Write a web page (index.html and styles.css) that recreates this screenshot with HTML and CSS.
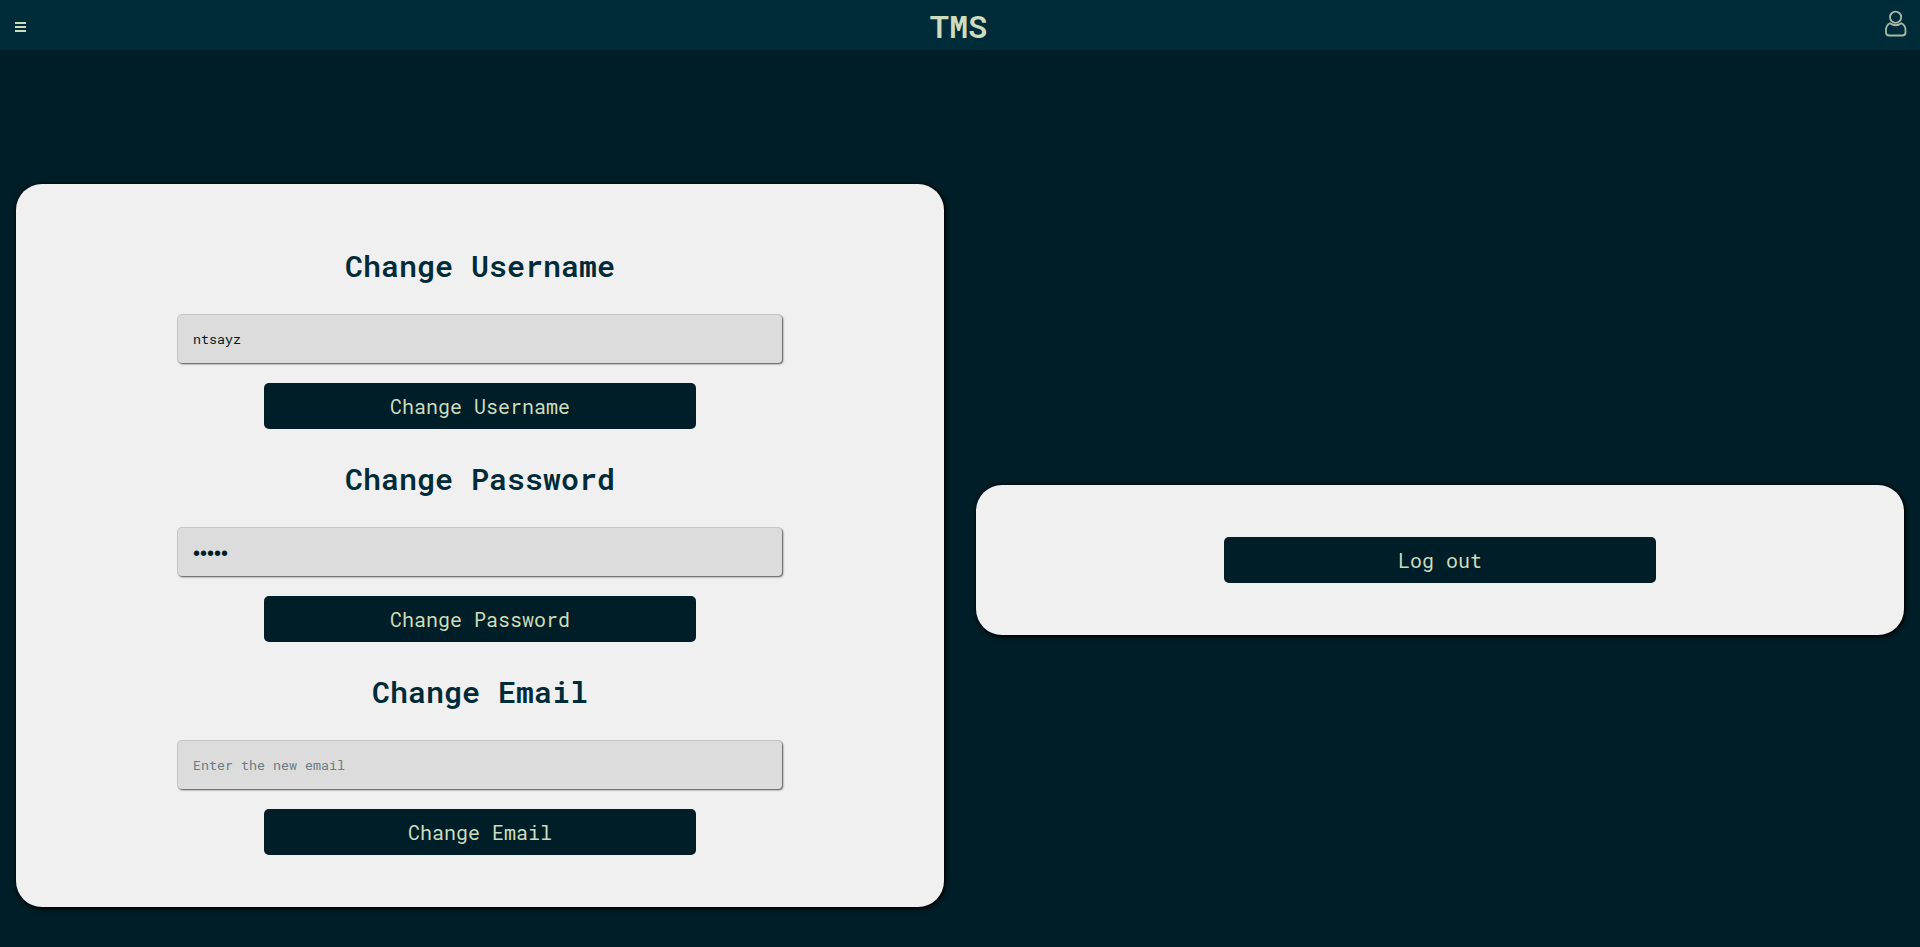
FILE: index.html
```
<!DOCTYPE html>
<html lang="en">
<head>
<meta charset="utf-8">
<title>TMS</title>
<link rel="stylesheet" href="styles.css">
</head>
<body>
<header class="topbar">
  <button class="menu" type="button" aria-label="Menu">
    <svg width="11" height="10" viewBox="0 0 11 10" fill="currentColor"><path d="M0 0h11v2H0zM0 4h11v2H0zM0 8h11v2H0z"/></svg>
  </button>
  <h1 class="brand">TMS</h1>
  <a class="profile" href="#" aria-label="Profile">
    <svg width="22" height="27" viewBox="0 0 22 27" fill="none" stroke="currentColor" stroke-width="1.8"><circle cx="10.6" cy="7.200" r="5.600"/><path d="M5 13.200C2.300 14.500 1 17 1 20v2.500C1 24.700 2.300 25.500 4.300 25.500H17.200C19.500 25.500 20.500 24.500 20.500 22.500V20C20.500 17 19 14.500 16.300 13.200C12.800 15.700 8.500 15.700 5 13.200Z"/></svg>
  </a>
</header>
<main class="layout">
  <section class="card settings">
    <form class="group">
      <h2 class="heading"><label for="username">Change Username</label></h2>
      <input class="field" id="username" type="text" value="ntsayz">
      <button class="action" type="button">Change Username</button>
    </form>
    <form class="group">
      <h2 class="heading"><label for="password">Change Password</label></h2>
      <input class="field secret" id="password" type="password" value="12345">
      <button class="action" type="button">Change Password</button>
    </form>
    <form class="group">
      <h2 class="heading"><label for="email">Change Email</label></h2>
      <input class="field" id="email" type="email" placeholder="Enter the new email">
      <button class="action" type="button">Change Email</button>
    </form>
  </section>
  <section class="card session">
    <button class="action" type="button">Log out</button>
  </section>
</main>
</body>
</html>
```
FILE: styles.css
```
* { box-sizing: border-box; }
body {
  margin: 0;
  min-height: 100vh;
  background: #001e27;
  color: #002b38;
  font-family: "Roboto Mono", "Liberation Mono", monospace;
}
button, input { font-family: inherit; }
.topbar {
  display: grid;
  grid-template-columns: 1fr auto 1fr;
  align-items: center;
  height: 50px;
  padding: 0 13px 0 14px;
  background: #002b38;
  color: #cddcbc;
}
.menu {
  display: flex;
  justify-self: start;
  padding: 4px 0 0 1px;
  border: 0;
  background: none;
  color: inherit;
}
.brand {
  margin: 0;
  padding: 2px 4px 0 0;
  font-size: 32px;
  line-height: 40px;
  font-weight: 600;
}
.profile {
  display: flex;
  justify-self: end;
  margin-bottom: 4px;
  color: #a5bba6;
}
.layout {
  display: grid;
  grid-template-columns: 1fr 1fr;
  gap: 32px;
  padding: 134px 16px 40px;
  align-items: center;
}
.card {
  display: flex;
  flex-direction: column;
  align-items: center;
  gap: 30px;
  padding: 52px;
  border-radius: 26px;
  background: #f0f0f0;
  box-shadow: 1px 1px 4px 1px #000;
}
.settings { padding-top: 62px; }
.session { margin-top: 28px; }
.group {
  display: flex;
  flex-direction: column;
  align-items: center;
  width: 100%;
}
.heading {
  margin: 0 0 29px;
  font-size: 30px;
  line-height: 40px;
  font-weight: 600;
}
.field {
  width: 100%;
  max-width: 604px;
  height: 48px;
  margin-bottom: 20px;
  padding: 0 15px;
  border: 0;
  border-radius: 4px;
  background: #dcdcdc;
  color: #001e27;
  box-shadow: 1px 1px 2px #555, 0 0 0 1px #ccc;
}
.field::placeholder { color: #6b7c83; }
.secret {
  padding-top: 2px;
  font-family: "Liberation Sans", sans-serif;
  font-size: 20px;
}
.action {
  width: 100%;
  max-width: 432px;
  height: 46px;
  padding: 0;
  border: 0;
  border-radius: 5px;
  background: #001e27;
  color: #cddcbc;
  font-size: 20px;
}
```
